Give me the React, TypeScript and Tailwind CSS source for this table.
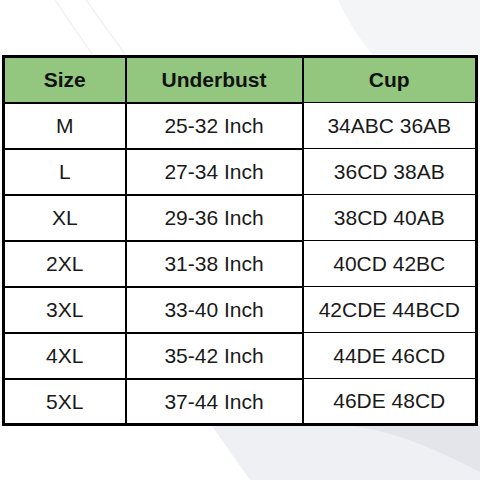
const rows = [
  ["M", "25-32 Inch", "34ABC 36AB"],
  ["L", "27-34 Inch", "36CD 38AB"],
  ["XL", "29-36 Inch", "38CD 40AB"],
  ["2XL", "31-38 Inch", "40CD 42BC"],
  ["3XL", "33-40 Inch", "42CDE 44BCD"],
  ["4XL", "35-42 Inch", "44DE 46CD"],
  ["5XL", "37-44 Inch", "46DE 48CD"],
];

function Backdrop() {
  return (
    <svg className="absolute inset-0" width="480" height="480" viewBox="0 0 480 480">
      <line x1="55" y1="0" x2="92" y2="54" stroke="#f1f2f4" strokeWidth="1.5" />
      <line x1="86" y1="0" x2="125" y2="54" stroke="#f1f2f4" strokeWidth="1.5" />
      <path d="M338 0 L480 0 L480 54 L372 54 Q352 30 338 0 Z" fill="#f4f5f7" />
      <path d="M212 426 L480 426 L480 480 L250 480 Z" fill="#eef0f3" />
      <path d="M350 426 Q400 430 480 472 L480 426 Z" fill="#e3e5ea" />
    </svg>
  );
}

export default function App() {
  return (
    <div
      className="relative h-[480px] w-[480px] overflow-hidden bg-white"
      style={{ fontFamily: '"Liberation Sans", Arial, sans-serif' }}
    >
      <Backdrop />
      <div className="relative px-[2px] pt-[55px]">
        <table className="w-[476px] table-fixed border-collapse border-[3px] border-black text-[21px] text-[#1a1a1a]">
          <colgroup>
            <col className="w-[122px]" />
            <col className="w-[177px]" />
            <col />
          </colgroup>
          <thead>
            <tr className="h-[46px] bg-[#93c77f]">
              {["Size", "Underbust", "Cup"].map((h, i) => (
                <th
                  key={h}
                  className={`border-black text-center font-bold text-[#111] ${i === 2 ? "border" : "border-2"}`}
                >
                  {h}
                </th>
              ))}
            </tr>
          </thead>
          <tbody className="bg-white">
            {rows.map((r) => (
              <tr key={r[0]} className="h-[46px]">
                <td className="border-2 border-black text-center">{r[0]}</td>
                <td className="border-2 border-black text-center">{r[1]}</td>
                <td className="border border-black text-center">{r[2]}</td>
              </tr>
            ))}
          </tbody>
        </table>
      </div>
    </div>
  );
}
